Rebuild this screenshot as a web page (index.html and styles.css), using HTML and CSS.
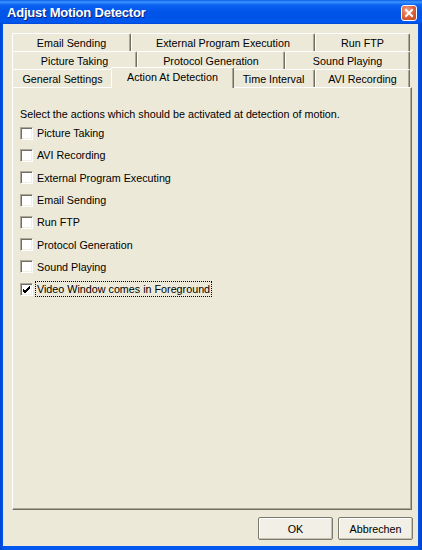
FILE: index.html
```html
<!DOCTYPE html>
<html>
<head>
<meta charset="utf-8">
<link rel="stylesheet" href="styles.css">
</head>
<body>
<div class="window">
  <div class="titlebar">
    <span class="title">Adjust Motion Detector</span>
    <span class="close"><svg width="10" height="10" viewBox="0 0 10 10"><path d="M2 2 L8 8 M8 2 L2 8" stroke="#fff" stroke-width="2" stroke-linecap="square"/></svg></span>
  </div>
  <div class="client">
    <div class="tabs">
      <div class="tabrow">
        <div class="tab w119">Email Sending</div>
        <div class="tab w184">External Program Execution</div>
        <div class="tab grow">Run FTP</div>
      </div>
      <div class="tabrow">
        <div class="tab w125">Picture Taking</div>
        <div class="tab w148">Protocol Generation</div>
        <div class="tab grow">Sound Playing</div>
      </div>
      <div class="tabrow">
        <div class="tab w101">General Settings</div>
        <div class="tab w119 selected">Action At Detection</div>
        <div class="tab w83">Time Interval</div>
        <div class="tab grow">AVI Recording</div>
      </div>
    </div>
    <div class="panel">
      <div class="intro">Select the actions which should be activated at detection of motion.</div>
      <div class="item"><span class="box"></span><span class="label">Picture Taking</span></div>
      <div class="item"><span class="box"></span><span class="label">AVI Recording</span></div>
      <div class="item"><span class="box"></span><span class="label">External Program Executing</span></div>
      <div class="item"><span class="box"></span><span class="label">Email Sending</span></div>
      <div class="item"><span class="box"></span><span class="label">Run FTP</span></div>
      <div class="item"><span class="box"></span><span class="label">Protocol Generation</span></div>
      <div class="item"><span class="box"></span><span class="label">Sound Playing</span></div>
      <div class="item"><span class="box checked"><svg width="9" height="9" viewBox="0 0 9 9"><path d="M1 4 L3 6 L8 1 M1 5 L3 7 L8 2 M1 6 L3 8 L8 3" stroke="#000" stroke-width="1" fill="none"/></svg></span><span class="label focus">Video Window comes in Foreground</span></div>
    </div>
    <div class="footer">
      <div class="btn">OK</div>
      <div class="btn">Abbrechen</div>
    </div>
  </div>
</div>
</body>
</html>
```

FILE: styles.css
```css
html, body {
  margin: 0;
  padding: 0;
}
body {
  width: 422px;
  height: 550px;
  overflow: hidden;
  font-family: "Liberation Sans", Arial, sans-serif;
  font-size: 10.75px;
  color: #000;
}
.window {
  width: 422px;
  height: 550px;
  box-sizing: border-box;
  display: flex;
  flex-direction: column;
  background: #0055E5;
  background: linear-gradient(to right, #0046D5 0, #0058EE 4px, #0058EE 417px, #0040C8 422px);
}
.titlebar {
  height: 24px;
  flex: none;
  display: flex;
  align-items: center;
  justify-content: space-between;
  padding: 0 5px 0 7px;
  background: linear-gradient(to bottom, #0A5FE8 0, #3D95FF 2px, #0A62F2 5px, #0055E8 12px, #0053E6 18px, #0059F2 22px, #0046D0 24px);
}
.title {
  color: #fff;
  font-family: "Liberation Sans", Arial, sans-serif;
  font-weight: bold;
  font-size: 13px;
  letter-spacing: -0.2px;
  text-shadow: 1px 1px 0 #0A1E7A;
  margin-top: 1px;
}
.close {
  width: 14px;
  height: 14px;
  border: 1px solid #fff;
  border-radius: 3px;
  background: radial-gradient(circle at 35% 30%, #F2A58A 0, #E2663F 45%, #C3401B 100%);
  display: flex;
  align-items: center;
  justify-content: center;
  margin-top: 2px;
}
.client {
  flex: 1;
  margin: 0 4px 4px 3px;
  background: #ECE9D8;
  display: flex;
  flex-direction: column;
  padding: 9px 5px 6px 9px;
}
.tabs {
  display: flex;
  flex-direction: column;
  margin-right: 1px;
}
.tabrow {
  display: flex;
  height: 18px;
  padding-right: 2px;
}
.tab {
  box-sizing: border-box;
  height: 18px;
  border-top: 1px solid #fff;
  border-left: 1px solid #fff;
  border-right: 1px solid #716F64;
  box-shadow: inset -1px 0 0 #ACA899;
  border-radius: 2px 2px 0 0;
  background: #ECE9D8;
  display: flex;
  align-items: center;
  justify-content: center;
  white-space: nowrap;
  padding-top: 1px;
}
.w83 { width: 83px; }
.w101 { width: 101px; }
.w119 { width: 119px; }
.w125 { width: 125px; }
.w148 { width: 148px; }
.w184 { width: 184px; }
.grow { flex: 1; }
.tab.selected {
  width: 123px;
  height: 21px;
  margin: -2px -2px -1px -2px;
  z-index: 2;
  padding-top: 0;
  padding-bottom: 2px;
}
.panel {
  flex: 1;
  margin-right: 1px;
  border-top: 1px solid #fff;
  border-left: 1px solid #fff;
  border-right: 1px solid #716F64;
  border-bottom: 1px solid #716F64;
  box-shadow: inset -1px -1px 0 #ACA899;
  padding: 19px 7px 0 7px;
  display: flex;
  flex-direction: column;
}
.intro {
  line-height: 14px;
  height: 15px;
  white-space: nowrap;
}
.item {
  height: 22.3px;
  display: flex;
  align-items: center;
}
.box {
  width: 13px;
  height: 13px;
  box-sizing: border-box;
  border-top: 1px solid #ACA899;
  border-left: 1px solid #ACA899;
  border-right: 1px solid #fff;
  border-bottom: 1px solid #fff;
  box-shadow: inset 1px 1px 0 #716F64, inset -1px -1px 0 #F1EFE2;
  background: #fff;
  margin-right: 4px;
  flex: none;
  display: flex;
  align-items: center;
  justify-content: center;
}
.label {
  white-space: nowrap;
  line-height: 14px;
  border: 1px dotted transparent;
  margin-left: -2px;
  padding: 0 1px;
}
.label.focus {
  border-color: #000;
}
.footer {
  height: 23px;
  margin-top: 7px;
  display: flex;
  justify-content: flex-end;
  gap: 5px;
}
.btn {
  width: 75px;
  height: 23px;
  box-sizing: border-box;
  border: 1px solid #7A7A6E;
  border-radius: 2px;
  background: #F1EFE6;
  box-shadow: inset -1px -1px 0 #C7C2B4, inset 1px 1px 0 #fff;
  display: flex;
  align-items: center;
  justify-content: center;
}
```
